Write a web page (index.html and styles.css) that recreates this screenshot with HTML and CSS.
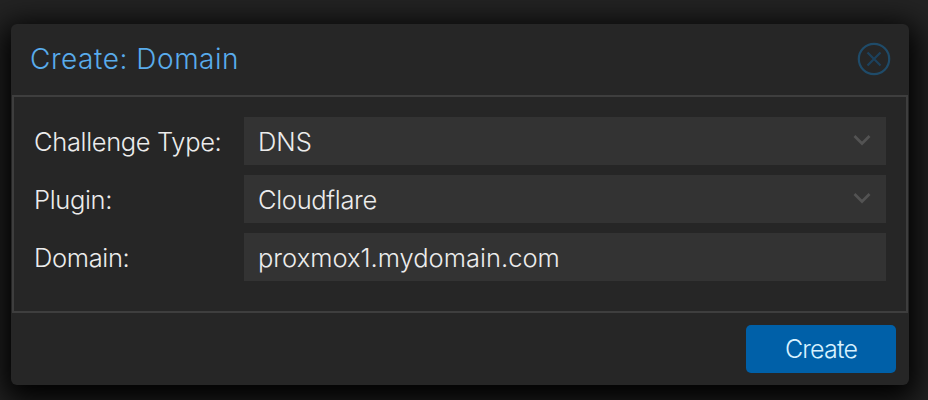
FILE: index.html
```html
<!DOCTYPE html>
<html lang="en">
<head>
<meta charset="utf-8">
<title>Create: Domain</title>
<link rel="stylesheet" href="styles.css">
</head>
<body>
<section class="window" role="dialog" aria-labelledby="window-title">
  <header class="window-header">
    <h1 class="window-title" id="window-title">Create: Domain</h1>
    <svg class="close" viewBox="0 0 34 34" aria-label="Close">
      <circle cx="17" cy="17" r="15.2"/>
      <path d="M10.5 10.5l13 13M23.5 10.5l-13 13"/>
    </svg>
  </header>
  <div class="window-body">
    <div class="row">
      <span class="label">Challenge Type:</span>
      <div class="field"><span class="selected">DNS</span>
        <svg class="chevron" viewBox="0 0 18 12"><path d="M1.5 2L9 9.5L16.5 2"/></svg>
      </div>
    </div>
    <div class="row">
      <span class="label">Plugin:</span>
      <div class="field"><span class="selected plugin">Cloudflare</span>
        <svg class="chevron" viewBox="0 0 18 12"><path d="M1.5 2L9 9.5L16.5 2"/></svg>
      </div>
    </div>
    <div class="row">
      <span class="label">Domain:</span>
      <div class="field"><span>proxmox1.mydomain.com</span></div>
    </div>
  </div>
  <footer class="window-footer">
    <button class="create" type="button">Create</button>
  </footer>
</section>
</body>
</html>
```

FILE: styles.css
```css
* { box-sizing: border-box; }
body {
  margin: 0;
  height: 400px;
  padding: 24px 19px 0 11px;
  overflow: hidden;
  background: #232323;
  font-family: Inter, "Liberation Sans", sans-serif;
  font-size: 25.5px;
  font-weight: 300;
  color: #ececec;
}
.window {
  height: 361px;
  padding: 0 1px;
  border-radius: 6px;
  background: #262626;
  box-shadow: 0 8px 30px 8px #000;
}
.window-header {
  display: flex;
  align-items: center;
  justify-content: space-between;
  height: 71px;
  padding: 0 17px 2px 18px;
}
.window-title {
  margin: 0;
  font-size: 28px;
  font-weight: 300;
  line-height: 36px;
  letter-spacing: 0.54px;
  color: #59acec;
}
.close {
  width: 34px;
  height: 34px;
  fill: none;
  stroke: #1f4b69;
  stroke-width: 2.2;
}
.close path {
  stroke: #1c415d;
}
.window-body {
  display: flex;
  flex-direction: column;
  gap: 10px;
  height: 218px;
  padding: 20px 20px 0;
  border: 2px solid #3e3e3e;
}
.row {
  display: grid;
  grid-template-columns: 210px 1fr;
  grid-template-rows: 48px;
  line-height: 50px;
  white-space: nowrap;
}
.label {
  letter-spacing: -0.35px;
}
.field {
  display: flex;
  align-items: center;
  justify-content: space-between;
  height: 48px;
  padding: 0 15px 0 14px;
  background: #333;
}
.field > span {
  padding-top: 2px;
}
.plugin {
  letter-spacing: -0.33px;
}
.chevron {
  width: 18px;
  height: 12px;
  margin-bottom: 2px;
  fill: none;
  stroke: #535353;
  stroke-width: 2.7;
}
.window-footer {
  display: flex;
  justify-content: flex-end;
  padding: 12px 12px 0;
}
.create {
  width: 150px;
  height: 48px;
  padding: 0;
  border: 0;
  border-radius: 5px;
  background: #0060a8;
  color: #d8f2ff;
  font: 300 25px/48px Inter, "Liberation Sans", sans-serif;
  letter-spacing: -0.8px;
}
```
